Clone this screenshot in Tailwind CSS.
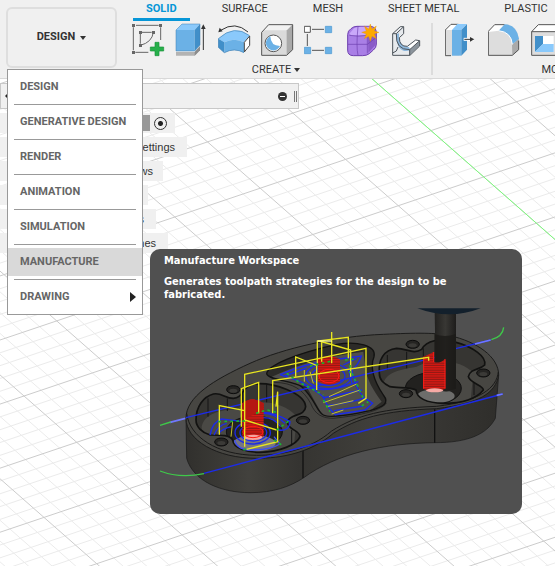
<!DOCTYPE html>
<html lang="en">
<head>
  <meta charset="UTF-8">
  <meta name="viewport" content="width=device-width, initial-scale=1.0">
  <title>Workspace Menu</title>
  <script src="https://cdn.jsdelivr.net/npm/@tailwindcss/browser@4"></script>
</head>
<body class="relative h-screen overflow-hidden bg-white font-['Liberation_Sans',Arial,sans-serif] text-[#333]">

  <!-- canvas grid -->
  <svg id="grid" class="absolute inset-0 size-full" fill="none" aria-hidden="true"></svg>

  <!-- toolbar -->
  <header class="relative flex h-[79px] overflow-hidden border-b border-[#d8d8d8] bg-[#f0f0f0] font-[Roboto,sans-serif] text-[11px]">
    <button class="mt-[7px] ml-[6px] flex h-[61px] w-[111px] shrink-0 items-center justify-center gap-[5px] rounded-md border-2 border-[#dedede] font-bold" aria-haspopup="menu" aria-expanded="true">
      DESIGN
      <svg class="h-1 w-[6px]" viewBox="0 0 6 4"><path d="M0 0h6L3 4z" fill="#333"/></svg>
    </button>

    <div class="ml-4 shrink-0">
      <nav class="flex h-[21px] gap-[19px] leading-[18px]">
        <a href="#" class="border-b-3 border-[#0696d7] px-[13px] font-bold text-[#0696d7]">SOLID</a>
        <a href="#" class="px-[13px]">SURFACE</a>
        <a href="#" class="px-[13px]">MESH</a>
        <a href="#" class="px-[13px]">SHEET METAL</a>
        <a href="#" class="px-[13px]">PLASTIC</a>
      </nav>

      <div class="mt-[2px] flex">
        <section class="-ml-px">
          <div class="flex gap-[9px]">
            <button aria-label="Create Sketch">
              <svg class="size-[34px]" viewBox="36 69 102 102">
                <path d="M40 76h82v44M40 76v81h45M61 97h39M61 97v39M100 97q-4 30-39 39" fill="none" stroke="#666" stroke-width="3"/>
                <path d="M34 70h14v12H34zM116 70h12v12h-12zM34 151h12v12H34zM56 92h10v10H56zM95 92h10v10H95zM56 131h10v10H56z" fill="#f0f0f0"/>
                <path d="M36 72h9v9h-9zM117 72h9v9h-9zM36 153h9v9h-9zM57 93h9v9h-9zM96 93h9v9h-9zM57 132h9v9h-9z" fill="#666"/>
                <path d="M105 127h12v14h14v12h-14v14h-12v-14H91v-12h14z" fill="#27b04b" stroke="#189239" stroke-width="2"/>
              </svg>
            </button>
            <button aria-label="Extrude">
              <svg class="size-[34px]" viewBox="165 69 102 102">
                <path d="M168 156h56l16-17v12l-16 16h-56z" fill="#b3b3b3"/><path d="M224 156l16-17v12l-16 16z" fill="#8c8c8c"/>
                <path d="M168 90h56v63h-56z" fill="#6bb1e6"/><path d="M168 90l18-18h54l-16 18z" fill="#8ac9fb"/><path d="M224 90l16-18v63l-16 18z" fill="#418fc9"/>
                <path d="M168 90v63h56l16-18V72h-54z" fill="none" stroke="#3d7fb3" stroke-width="1.5"/>
                <path d="M250 150V80" stroke="#333" stroke-width="3"/><path d="M250 73l-7 14h14z" fill="#333"/>
              </svg>
            </button>
            <button aria-label="Revolve">
              <svg class="size-[34px]" viewBox="294 69 102 102">
                <path d="M295 116q48-44 94-9l-17 20q-29-16-59 0z" fill="#8ac9fb"/><path d="M313 127q30-16 59 0v31q-29-16-59 0z" fill="#6bb1e6"/>
                <path d="M295 116l18 11v31l-18-16z" fill="#418fc9"/><path d="M295 116q48-44 94-9M295 116v26l18 16q30-16 59 0" fill="none" stroke="#3d7fb3" stroke-width="2"/>
                <path d="M373 127l16-19v28l-16 20z" fill="#fff" stroke="#444" stroke-width="3"/>
                <path d="M384 96q-38-34-82-5" fill="none" stroke="#333" stroke-width="3"/><path d="M295 97l4-14 9 11z" fill="#333"/>
              </svg>
            </button>
            <button aria-label="Hole">
              <svg class="size-[34px]" viewBox="-27 69 102 102">
                <path d="M-26 97L-4 73h72v76l-18 17h-76z" fill="#dadada"/><path d="M50 91l18-18v76l-18 17z" fill="#a9a9a9"/><path d="M-26 91L-4 73h72L50 91z" fill="#f2f2f2"/>
                <path d="M-25 97L-4 74h72v75l-18 17h-75z" fill="none" stroke="#555" stroke-width="3"/>
                <circle cx="10" cy="130" r="25" fill="#fff" stroke="#555" stroke-width="3"/><path d="M1 109a22 22 0 1 0 29 29Q2 138 1 109z" fill="#6bb1e6"/>
              </svg>
            </button>
            <button aria-label="Rectangular Pattern">
              <svg class="size-[34px]" viewBox="102 69 102 102">
                <path d="M126 88h36M126 151h36M112 102v36" stroke="#555" stroke-width="3"/>
                <path d="M103 79h18v18h-18z" fill="#fff" stroke="#555" stroke-width="3"/>
                <path d="M166 79h19v19h-19zM103 142h19v19h-19zM166 142h19v19h-19z" fill="#6bb1e6" stroke="#4a97d0" stroke-width="2"/>
              </svg>
            </button>
            <button aria-label="Create Form">
              <svg class="size-[34px]" viewBox="231 69 102 102">
                <path d="M233 104q0-12 10-18 8-7 18-7h38q20 0 20 20v33q0 12-9 18l-12 11q-8 6-20 6h-28q-17 0-17-17z" fill="#a97fe6" stroke="#6d3fae" stroke-width="3"/>
                <path d="M238 101l14-16q8-5 20-5h30l-10 20-8 6h-40z" fill="#c9a8fa"/><path d="M294 110l23-20v44l-22 24z" fill="#8a5cc8"/>
                <path d="M234 133h58l26-20M264 80q-6 60 0 86M238 106q26 5 54 0l24-18M292 106v54" fill="none" stroke="#6d3fae" stroke-width="2"/>
                <path d="M301 72l5 15 13-9-6 15 14 4-14 5 6 14-13-7-5 15-5-15-13 7 6-14-14-5 14-4-6-15 13 9z" fill="#fda900" stroke="#e39200"/>
              </svg>
            </button>
            <button aria-label="Flange">
              <svg class="size-[34px]" viewBox="360 69 102 102">
                <path d="M368 101l23-21h10v21l-13 12q0 27 24 26l25-19 12 2v16l-29 28h-52z" fill="#e7eaed"/>
                <path d="M379 102l8-2v18q8 24 30 22l4 11q-21 7-33-8-10-14-9-41z" fill="#8fb8dc"/>
                <path d="M412 139l25-19 12 2-24 24z" fill="#fff"/><path d="M419 149l29-25v14l-29 27z" fill="#8b949c"/>
                <path d="M368 101l23-21h10v21l-13 12q0 27 24 26l25-19 12 2v16l-29 28h-52zM379 101q-3 49 40 48v16M368 101h11l21-20M419 149l29-26M368 159q14-3 16-18" fill="none" stroke="#4d545b" stroke-width="3"/>
              </svg>
            </button>
          </div>
          <button class="mx-auto mt-[5px] flex items-center gap-[3px] pr-1 leading-4">CREATE <svg class="h-1 w-[6px]" viewBox="0 0 6 4"><path d="M0 0h6L3 4z" fill="#333"/></svg></button>
        </section>

        <div class="ml-[7px] h-[52px] w-[2px] bg-[#dcdcdc]"></div>

        <section class="ml-3 w-[242px]">
          <div class="flex gap-[9px]">
            <button aria-label="Press Pull">
              <svg class="size-[34px]" viewBox="90 69 102 102">
                <path d="M91 90l17-17h24v94H91z" fill="#ddd"/><path d="M91 90l17-17h24l-20 17z" fill="#fff"/><path d="M108 167H91V90l17-17h22" fill="none" stroke="#555" stroke-width="3"/>
                <path d="M111 90h28v77h-28z" fill="#6bb1e6"/><path d="M111 90l16-18h28l-16 18z" fill="#8ac9fb"/><path d="M139 90l17-18v77l-17 18z" fill="#418fc9"/>
                <path d="M146 118h30" stroke="#fff" stroke-width="9"/><path d="M148 118h20" stroke="#333" stroke-width="3"/><path d="M178 118l-13-7v14z" fill="#333"/>
              </svg>
            </button>
            <button aria-label="Fillet">
              <svg class="size-[34px]" viewBox="219 69 102 102">
                <path d="M217 96l22-23h30q42 2 42 52v25l-17 16h-77z" fill="#ddd"/><path d="M217 96l22-23h30l-17 19z" fill="#fff"/><path d="M291 135l20-20v35l-19 16z" fill="#aaa"/>
                <path d="M220 94l19-20h30M311 122v27l-19 17h-72V94" fill="none" stroke="#555" stroke-width="3"/>
                <path d="M251 92l18-19q36 1 43 43l-20 17q-3-37-41-41z" fill="#6bb1e6"/><path d="M251 92q38 4 41 41" fill="none" stroke="#fff" stroke-width="3"/>
              </svg>
            </button>
            <button aria-label="Shell">
              <svg class="size-[34px]" viewBox="345 69 102 102">
                <path d="M347 95l20-21h80v92H347z" fill="#ddd"/><path d="M347 95l20-21h80v21z" fill="#fff"/><path d="M447 74h-80l-20 21v71h100M347 95h76l24-21" fill="none" stroke="#555" stroke-width="3"/>
                <path d="M357 108h56v48h-56z" fill="#fff"/><path d="M357 108h24v24l-24 24z" fill="#418fc9"/><path d="M381 132h32v24h-56z" fill="#8ac9fb"/>
              </svg>
            </button>
          </div>
          <button class="mx-auto mt-[5px] flex items-center gap-[3px] leading-4">MODIFY <svg class="h-1 w-[6px]" viewBox="0 0 6 4"><path d="M0 0h6L3 4z" fill="#333"/></svg></button>
        </section>
      </div>
    </div>
  </header>

  <!-- browser panel -->
  <aside class="relative mt-1 w-[299px] text-[11px] leading-5">
    <div class="flex h-[26px] items-center border border-[#c8c8c8] bg-[#f0f0f0] pl-1">
      <svg class="h-2 w-1" viewBox="0 0 4 8"><path d="M4 0v8L0 4z" fill="#222"/></svg>
      <button class="mr-[7px] ml-auto" aria-label="Collapse"><svg class="size-[9px]" viewBox="0 0 18 18"><circle cx="9" cy="9" r="9" fill="#333"/><path d="M4 9h10" stroke="#fff" stroke-width="2"/></svg></button>
      <div class="mr-px h-[11px] w-[3px] border-r border-l border-[#777]"></div>
    </div>
    <ul class="mt-1 space-y-1">
      <li class="flex h-5 w-[175px] items-center justify-end bg-[#f0f0f0] pr-2">
        <span class="mr-1 h-4 w-10 bg-[#999]"></span>
        <input type="radio" checked aria-label="Activate component" class="size-[13px] appearance-none rounded-full border border-[#333] bg-[radial-gradient(#222_0_2px,#f0f0f0_3px)]">
      </li>
      <li class="h-5 w-[187px] bg-[#f0f0f0] pr-3 text-right">Document Settings</li>
      <li class="h-5 w-[163px] bg-[#f0f0f0] pr-[10px] text-right">Named Views</li>
      <li class="h-5 w-[148px] bg-[#f0f0f0] pr-3 text-right">Origin</li>
      <li class="h-5 w-[156px] bg-[#f0f0f0] pr-3 text-right">Bodies</li>
      <li class="h-5 w-[168px] bg-[#f0f0f0] pr-3 text-right">Sketches</li>
    </ul>
  </aside>

  <!-- workspace menu -->
  <ul class="absolute top-[69px] left-[7px] w-[136px] border border-[#999] bg-white font-[Roboto,sans-serif] text-[11px] font-bold text-[#666]" role="menu">
    <li class="pt-[3px]"><button class="h-7 w-full px-3 text-left" role="menuitem">DESIGN</button><hr class="mx-[6px] mt-[3px] border-[#999]"></li>
    <li class="pt-[3px]"><button class="h-7 w-full px-3 text-left whitespace-nowrap" role="menuitem">GENERATIVE DESIGN</button><hr class="mx-[6px] mt-[3px] border-[#999]"></li>
    <li class="pt-[3px]"><button class="h-7 w-full px-3 text-left" role="menuitem">RENDER</button><hr class="mx-[6px] mt-[3px] border-[#999]"></li>
    <li class="pt-[3px]"><button class="h-7 w-full px-3 text-left" role="menuitem">ANIMATION</button><hr class="mx-[6px] mt-[3px] border-[#999]"></li>
    <li class="pt-[3px]"><button class="h-7 w-full px-3 text-left" role="menuitem">SIMULATION</button><hr class="mx-[6px] mt-[3px] border-[#999]"></li>
    <li class="pt-[3px]"><button class="h-7 w-full bg-[#d9d9d9] px-3 text-left" role="menuitem">MANUFACTURE</button><hr class="mx-[6px] mt-[3px] border-[#999]"></li>
    <li class="py-[3px]"><button class="flex h-7 w-full items-center justify-between pr-[6px] pl-3 text-left" role="menuitem">DRAWING <svg class="h-[10px] w-[6px]" viewBox="0 0 6 10"><path d="M0 0v10l6-5z" fill="#222"/></svg></button></li>
  </ul>

  <!-- tooltip -->
  <div class="absolute top-[249px] left-[150px] w-[372px] overflow-hidden rounded-[10px] bg-[#505050] font-['DejaVu_Sans_Condensed','DejaVu_Sans',sans-serif] text-[11px] leading-[13px] font-bold text-white" role="tooltip">
    <p class="px-[14px] pt-[5px]">Manufacture Workspace</p>
    <p class="mt-2 px-[14px] pr-16">Generates toolpath strategies for the design to be fabricated.</p>
    <svg class="block w-full" viewBox="0 183 1116 639" fill="none" aria-label="Machined part with toolpaths">
      <defs>
        <linearGradient id="wall"><stop offset="0" stop-color="#31302d"/><stop offset=".2" stop-color="#42413d"/><stop offset=".36" stop-color="#353431"/><stop offset=".6" stop-color="#403f3b"/><stop offset=".8" stop-color="#373633"/><stop offset="1" stop-color="#2f2e2b"/></linearGradient>
        <linearGradient id="shaft"><stop offset="0" stop-color="#22211f"/><stop offset=".5" stop-color="#383734"/><stop offset="1" stop-color="#1d1c1b"/></linearGradient>
        <pattern id="rings" width="64" height="7" patternUnits="userSpaceOnUse"><path d="M0 0h64v7H0z" fill="#8f1814"/><path d="M0 2h64" stroke="#f01a14" stroke-width="3"/></pattern>
        <clipPath id="leftPocket"><path d="M138 540C138 500 160 470 190 462C215 457 225 475 250 475C280 475 275 440 310 432C370 425 465 460 467 500C465 530 420 520 412 545C412 570 450 570 450 590C440 615 390 635 330 637C290 637 250 625 248 600C240 585 215 585 180 585C155 578 138 560 138 540z"/></clipPath>
        <clipPath id="midPocket"><path d="M350 400C355 375 440 340 560 313C620 303 680 315 672 350C660 380 670 420 700 465C720 490 700 500 660 512C600 525 540 535 520 525C500 515 495 475 455 440C430 422 350 420 350 400z"/></clipPath>
        <clipPath id="rightPocket"><path d="M688 400C685 360 700 330 740 325C770 325 790 345 815 328C830 300 870 295 910 305C970 320 1010 350 1004 375C990 390 960 385 955 410C960 430 1000 435 1000 450C980 475 940 490 880 490C820 488 800 470 798 450C780 440 740 445 720 440C700 430 688 420 688 400z"/></clipPath>
      </defs>

      <!-- body -->
      <path d="M108 535L110 655C130 725 215 758 300 758C370 758 420 740 460 714C560 640 700 610 855 608C950 608 1010 585 1036 535L1046 405L850 400z" fill="url(#wall)" stroke="#161616" stroke-width="2"/>
      <path d="M459 622V714M854 508V608" stroke="#111" stroke-width="4"/>
      <path d="M108 535C108 470 190 420 300 370C400 325 560 288 700 283C800 278 860 278 900 287C980 305 1046 350 1046 405C1036 460 990 490 860 506C700 512 620 535 550 580C480 640 390 655 320 655C200 655 108 600 108 535z" fill="#474642" stroke="#1c1c1b" stroke-width="3"/>
      <path d="M110 520C118 590 200 645 320 646C390 646 480 630 545 573C620 525 700 505 860 499C990 483 1040 445 1045 395" stroke="#1a1a19" stroke-width="3"/>

      <!-- left pocket -->
      <g clip-path="url(#leftPocket)">
        <path d="M130 420h350v230H130z" fill="#363532"/>
        <path d="M155 560C165 520 210 510 260 508C300 475 400 480 440 530L430 640H160z" fill="#4a4945"/>
        <path d="M174 475v55M232 475v38M277 440v60M350 432v55M425 570v45" stroke="#151515" stroke-width="3"/>
        <ellipse cx="313" cy="576" rx="84" ry="48" fill="#24231f" stroke="#111" stroke-width="3"/>
        <ellipse cx="313" cy="610" rx="64" ry="24" fill="#777780"/>
      </g>
      <path d="M138 540C138 500 160 470 190 462C215 457 225 475 250 475C280 475 275 440 310 432C370 425 465 460 467 500C465 530 420 520 412 545C412 570 450 570 450 590C440 615 390 635 330 637C290 637 250 625 248 600C240 585 215 585 180 585C155 578 138 560 138 540z" stroke="#121211" stroke-width="5"/>

      <!-- middle pocket -->
      <g clip-path="url(#midPocket)">
        <path d="M340 300h380v240H340z" fill="#2c2b28"/>
        <path d="M362 412C440 375 520 350 640 335L646 380C650 420 670 450 695 485L650 520L520 530L470 440z" fill="#504f4b"/>
      </g>
      <path d="M350 400C355 375 440 340 560 313C620 303 680 315 672 350C660 380 670 420 700 465C720 490 700 500 660 512C600 525 540 535 520 525C500 515 495 475 455 440C430 422 350 420 350 400z" stroke="#121211" stroke-width="4"/>
      <path d="M372 427C430 428 460 450 482 490C495 525 520 535 550 535C640 525 690 512 709 490" stroke="#1a1a19" stroke-width="2"/>

      <!-- right pocket -->
      <g clip-path="url(#rightPocket)">
        <path d="M680 290h340v210H680z" fill="#363532"/>
        <path d="M700 440C700 400 740 390 800 380C850 352 940 360 970 400L960 500H760z" fill="#4a4945"/>
        <path d="M712 345v45M770 335v50M820 325v45M972 420v45" stroke="#151515" stroke-width="3"/>
        <ellipse cx="850" cy="445" rx="84" ry="48" fill="#22211f" stroke="#111" stroke-width="3"/>
        <ellipse cx="858" cy="468" rx="56" ry="21" fill="#6d6d6b"/>
      </g>
      <path d="M688 400C685 360 700 330 740 325C770 325 790 345 815 328C830 300 870 295 910 305C970 320 1010 350 1004 375C990 390 960 385 955 410C960 430 1000 435 1000 450C980 475 940 490 880 490C820 488 800 470 798 450C780 440 740 445 720 440C700 430 688 420 688 400z" stroke="#121211" stroke-width="5"/>

      <!-- screw holes -->
      <g fill="#252422" stroke="#0c0c0c" stroke-width="3">
        <ellipse cx="250" cy="449" rx="20" ry="12"/><ellipse cx="459" cy="541" rx="20" ry="12"/><ellipse cx="214" cy="606" rx="20" ry="12"/>
        <ellipse cx="788" cy="313" rx="20" ry="12"/><ellipse cx="1000" cy="399" rx="20" ry="12"/><ellipse cx="768" cy="461" rx="20" ry="12"/>
      </g>
      <g fill="#3b3a37">
        <ellipse cx="250" cy="452" rx="12" ry="6"/><ellipse cx="459" cy="544" rx="12" ry="6"/><ellipse cx="214" cy="609" rx="12" ry="6"/>
        <ellipse cx="788" cy="316" rx="12" ry="6"/><ellipse cx="1000" cy="402" rx="12" ry="6"/><ellipse cx="768" cy="464" rx="12" ry="6"/>
      </g>

      <!-- cutting passes -->
      <g stroke="#1c2be8" stroke-width="4">
        <path d="M108 533L856 352M917 326L1022 300M162 700L1058 462"/>
        <path d="M180 585Q188 545 215 537L280 545Q330 490 420 545Q418 575 385 570M192 585Q205 555 230 550M205 580Q220 565 245 560M325 520Q370 515 405 550M335 533Q370 530 392 560"/>
        <ellipse cx="308" cy="578" rx="53" ry="34"/><ellipse cx="310" cy="578" rx="40" ry="25"/>
        <path d="M254 600Q262 632 310 630Q365 628 390 612L372 590" stroke="#4050f0"/>
        <path d="M390 404Q470 370 545 360L634 348Q625 375 606 390Q612 440 640 470L668 490L645 510L556 524Q530 500 520 470Q480 440 450 424L390 404M405 408L470 384"/>
        <ellipse cx="535" cy="408" rx="68" ry="38"/><ellipse cx="535" cy="408" rx="50" ry="28"/>
        <path d="M455 430Q510 470 625 425M518 474L636 450M532 496Q600 490 648 472M552 512L640 498M580 375L620 355M596 390L606 430"/>
      </g>
      <g stroke="#6f78ff" stroke-width="5"><path d="M60 547L106 535M975 312L1022 300M1040 466L1058 462"/></g>
      <g stroke="#3fc84a" stroke-width="4"><path d="M30 556L62 546M30 693Q90 716 162 701M1024 299Q1058 290 1061 262"/></g>

      <!-- bore cylinders -->
      <path d="M277 490Q308 466 341 490V588Q308 612 277 588z" fill="url(#rings)"/><path d="M277 490Q308 466 341 490V510L277 540z" fill="#b51712"/><ellipse cx="309" cy="592" rx="28" ry="8" fill="#f5a5a0"/><ellipse cx="309" cy="576" rx="30" ry="17" stroke="#ff1c16" stroke-width="3"/>
      <path d="M504 358Q536 338 570 358V424Q536 444 504 424z" fill="url(#rings)"/><ellipse cx="537" cy="408" rx="30" ry="20" stroke="#ff1c16" stroke-width="3"/>

      <!-- cutter -->
      <path d="M854 218h64v228q-30 18-60 0z" fill="url(#shaft)"/><path d="M853 282q32 12 64 0v164q-30 14-64 0z" fill="#1b1a18" opacity=".8"/>
      <path d="M802 205h190q-94 36-190 0z" fill="#13202c"/>
      <path d="M821 350l30-14v30q18 6 35-10v90q-30 16-67 0z" fill="url(#rings)"/><path d="M821 350v96M885 358v88M851 336v30" stroke="#ff1c16" stroke-width="3"/><ellipse cx="854" cy="451" rx="26" ry="6" fill="#f7aaa5"/>

      <!-- rapid moves -->
      <g stroke="#e8e520" stroke-width="4">
        <path d="M284 620V403L648 325V475L625 490M368 520V422L836 352v10M274 560V446L326 427V520M208 584V497L284 512M284 540L380 570M383 455V605L290 628M378 500L383 455"/>
        <path d="M437 410V351L500 376V450M502 370V303L595 292V355M508 303L602 330V410M515 303V365M545 276V370"/>
      </g>
      <path d="M537 470L620 432M520 488L630 450M530 500L610 482M545 522L580 510M480 395l10 35M463 390v35M248 545l-5 45" stroke="#c3c12c" stroke-width="3"/>
      <path d="M502 303H545" stroke="#fbfaa5" stroke-width="4"/>
      <g stroke="#18b52f" stroke-width="5" stroke-dasharray="8 10">
        <path d="M205 545L285 543M318 520L350 510L385 518M380 570L420 540M372 600L395 615M280 630l14-5M410 400L445 425L520 465M480 378L550 362M585 360L620 357M600 375V400M606 400L640 475M520 480L540 515M635 498L655 485"/>
      </g>
    </svg>
  </div>

  <script>
    // ground grid: two skewed families of lines, every fifth one is darker
    const origin = [378.3, 84.3];
    const u = [52.7, 46.3];
    const v = [85.4, -28.8];
    const reach = 14;

    function gridLine(dir, step, n, color) {
      const x = origin[0] + step[0] * n / 5;
      const y = origin[1] + step[1] * n / 5;
      return `<line x1="${x - dir[0] * reach}" y1="${y - dir[1] * reach}" x2="${x + dir[0] * reach}" y2="${y + dir[1] * reach}" stroke="${color}"/>`;
    }

    let minor = '';
    let major = '';
    for (let n = -60; n <= 60; n++) {
      if (n % 5) {
        minor += gridLine(u, v, n, '#ebebeb') + gridLine(v, u, n, '#ebebeb');
      } else {
        major += gridLine(u, v, n, '#cccccc') + gridLine(v, u, n, '#cccccc');
      }
    }
    document.getElementById('grid').innerHTML = minor + major + gridLine(u, v, 0, '#7dfb7d');
  </script>
</body>
</html>
